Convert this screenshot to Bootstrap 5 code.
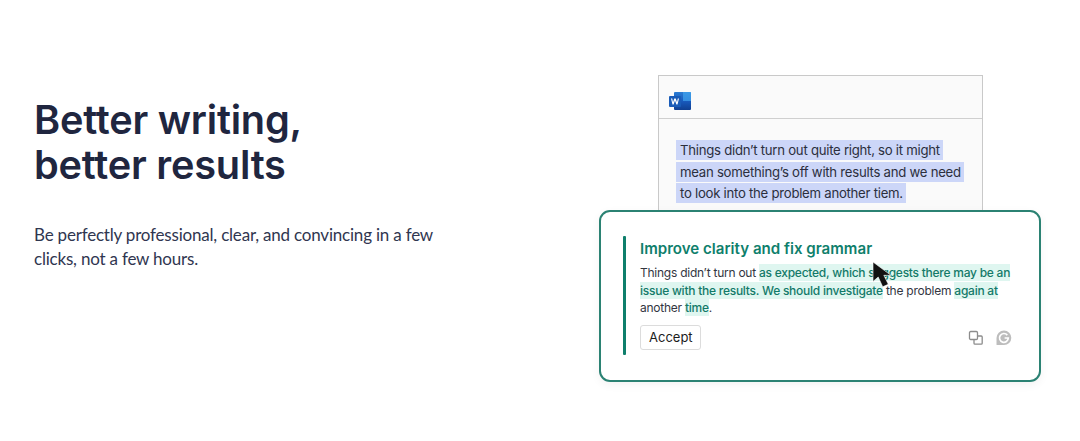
<!DOCTYPE html>
<html lang="en"><head><meta charset="utf-8"><title>Better writing</title>
<link href="https://cdn.jsdelivr.net/npm/bootstrap@5.3.0/dist/css/bootstrap.min.css" rel="stylesheet">
<style>
html,body{height:441px;overflow:hidden;background:#fff}
body{font-family:Inter,"Liberation Sans",sans-serif;color:#20263f}
.hero-wrap{height:441px}
.copy-col{width:599px;padding:98px 0 0 34px;flex:none}
.hero-title{font-size:39.7px;line-height:45px;font-weight:600;letter-spacing:-.22px;color:#20263f;margin:0 0 35px}
.hero-text{font-family:Lato,"Liberation Sans",sans-serif;font-size:17px;line-height:24px;letter-spacing:-.2px;color:#303650;margin:0;width:410px}
.art-col{width:442px;padding-top:75px;flex:none}
.doc-win{width:325px;height:136px;margin-left:59px;background:#fafafa;border:1px solid #c9c9c9;border-bottom:0}
.doc-head{height:43px;border-bottom:1px solid #cfcfcf;padding:11px 0 0 10px}
.doc-body{padding:21px 10px 0 17px;font-size:13.2px;line-height:21.5px;color:#2b2f3d;letter-spacing:-.27px;white-space:nowrap}
.sel-text{background:#ccd6f8;padding:2px 3px 2px 4px;-webkit-box-decoration-break:clone;box-decoration-break:clone}
.sug-card{height:172px;margin-top:-1px;background:#fff;border:2px solid #2b8273;border-radius:11px;padding:24px 24px 0 22px;box-shadow:0 3px 10px rgba(0,0,0,.05)}
.sug-bar{width:3px;height:119px;background:#0f7f6c;flex:none;margin-right:14px;border-radius:1px}
.sug-title{font-size:15.1px;line-height:22px;font-weight:600;color:#0f7f6c;margin:2px 0 0}
.sug-text{font-size:12px;line-height:17.5px;color:#33363f;margin:4px 0 0;width:376px;letter-spacing:-.25px}
.sug-add{background:#dff6f0;color:#137a69;font-weight:500;padding:1px 0}
.accept-btn{font-size:13px;line-height:18px;padding:2.5px 8px;width:61px;color:#1c1c1c;background:#fff;border:1px solid #dcdcdc;border-radius:3px;margin-top:8px;--bs-btn-hover-bg:#fff}
.sug-icons{margin-top:13px;margin-left:1px}
.cursor-mark{position:absolute;left:232px;top:25px}
.sug-inner{position:relative}
</style></head>
<body>
<main class="hero-wrap d-flex">
  <section class="copy-col">
    <h1 class="hero-title">Better writing,<br>better results</h1>
    <p class="hero-text">Be perfectly professional, clear, and convincing in a few clicks, not a few hours.</p>
  </section>
  <section class="art-col">
    <div class="doc-win">
      <div class="doc-head">
        <svg width="23" height="20" viewBox="0 0 23 20" aria-label="Word">
          <defs><linearGradient id="wg" x1="0" y1="0" x2="0" y2="1"><stop offset="0" stop-color="#2b7cd3"/><stop offset=".5" stop-color="#185abd"/><stop offset="1" stop-color="#103f91"/></linearGradient></defs>
          <rect x="5" y="1" width="17" height="18" rx="1" fill="url(#wg)"/>
          <rect x="14" y="1" width="8" height="9" fill="#41a5ee" opacity=".7"/>
          <rect x="0" y="5" width="12" height="11" rx="1" fill="#1a5cb8"/>
          <path d="M2 7.400 3.500 13.600h1.100l1.400-4.200 1.400 4.200h1.100L10 7.400H8.800l-.8 3.800-1.300-3.800H5.300L4 11.200l-.8-3.800z" fill="#fff"/>
        </svg>
      </div>
      <div class="doc-body"><span class="sel-text">Things didn’t turn out quite right, so it might<br>mean something’s off with results and we need<br>to look into the problem another tiem.</span></div>
    </div>
    <div class="sug-card d-flex">
      <div class="sug-bar"></div>
      <div class="sug-inner flex-grow-1">
        <h2 class="sug-title">Improve clarity and fix grammar</h2>
        <p class="sug-text">Things didn’t turn out <span class="sug-add">as expected, which suggests there may be an issue with the results. We should investigate</span> the problem <span class="sug-add">again at</span> another <span class="sug-add">time</span>.</p>
        <div class="d-flex justify-content-between align-items-start">
          <button type="button" class="btn accept-btn">Accept</button>
          <div class="sug-icons d-flex align-items-center gap-2 me-1">
            <svg width="16" height="16" viewBox="0 0 16 16" fill="none" stroke="#8c8c8c" stroke-width="1.3"><rect x="1.500" y="1.500" width="8" height="8" rx="1.200" fill="#fff"/><path d="M10 6h3.200a1 1 0 0 1 1 1v6.200a1 1 0 0 1-1 1H7a1 1 0 0 1-1-1V10"/></svg>
            <svg class="ms-1" width="16" height="16" viewBox="0 0 16 16"><path d="M8 .5a7.300 7.300 0 1 1 0 14.600H1.200c-.5 0-.7-.3-.7-.7V8A7.500 7.500 0 0 1 8 .5z" fill="#bdbdbd"/><path d="M11.300 5.100A4.400 4.400 0 1 0 12.300 8H8.600" fill="none" stroke="#fff" stroke-width="1.700"/></svg>
          </div>
        </div>
        <svg class="cursor-mark" width="22" height="28" viewBox="0 0 22 28" aria-hidden="true"><path d="M1 1v19.500l5.200-4.500 4.500 9.800 5.600-2.500-4.500-9h7.200z" fill="#111" stroke="#fff" stroke-width=".6"/></svg>
      </div>
    </div>
  </section>
</main>
<script src="https://cdn.jsdelivr.net/npm/bootstrap@5.3.0/dist/js/bootstrap.bundle.min.js"></script>
</body></html>
